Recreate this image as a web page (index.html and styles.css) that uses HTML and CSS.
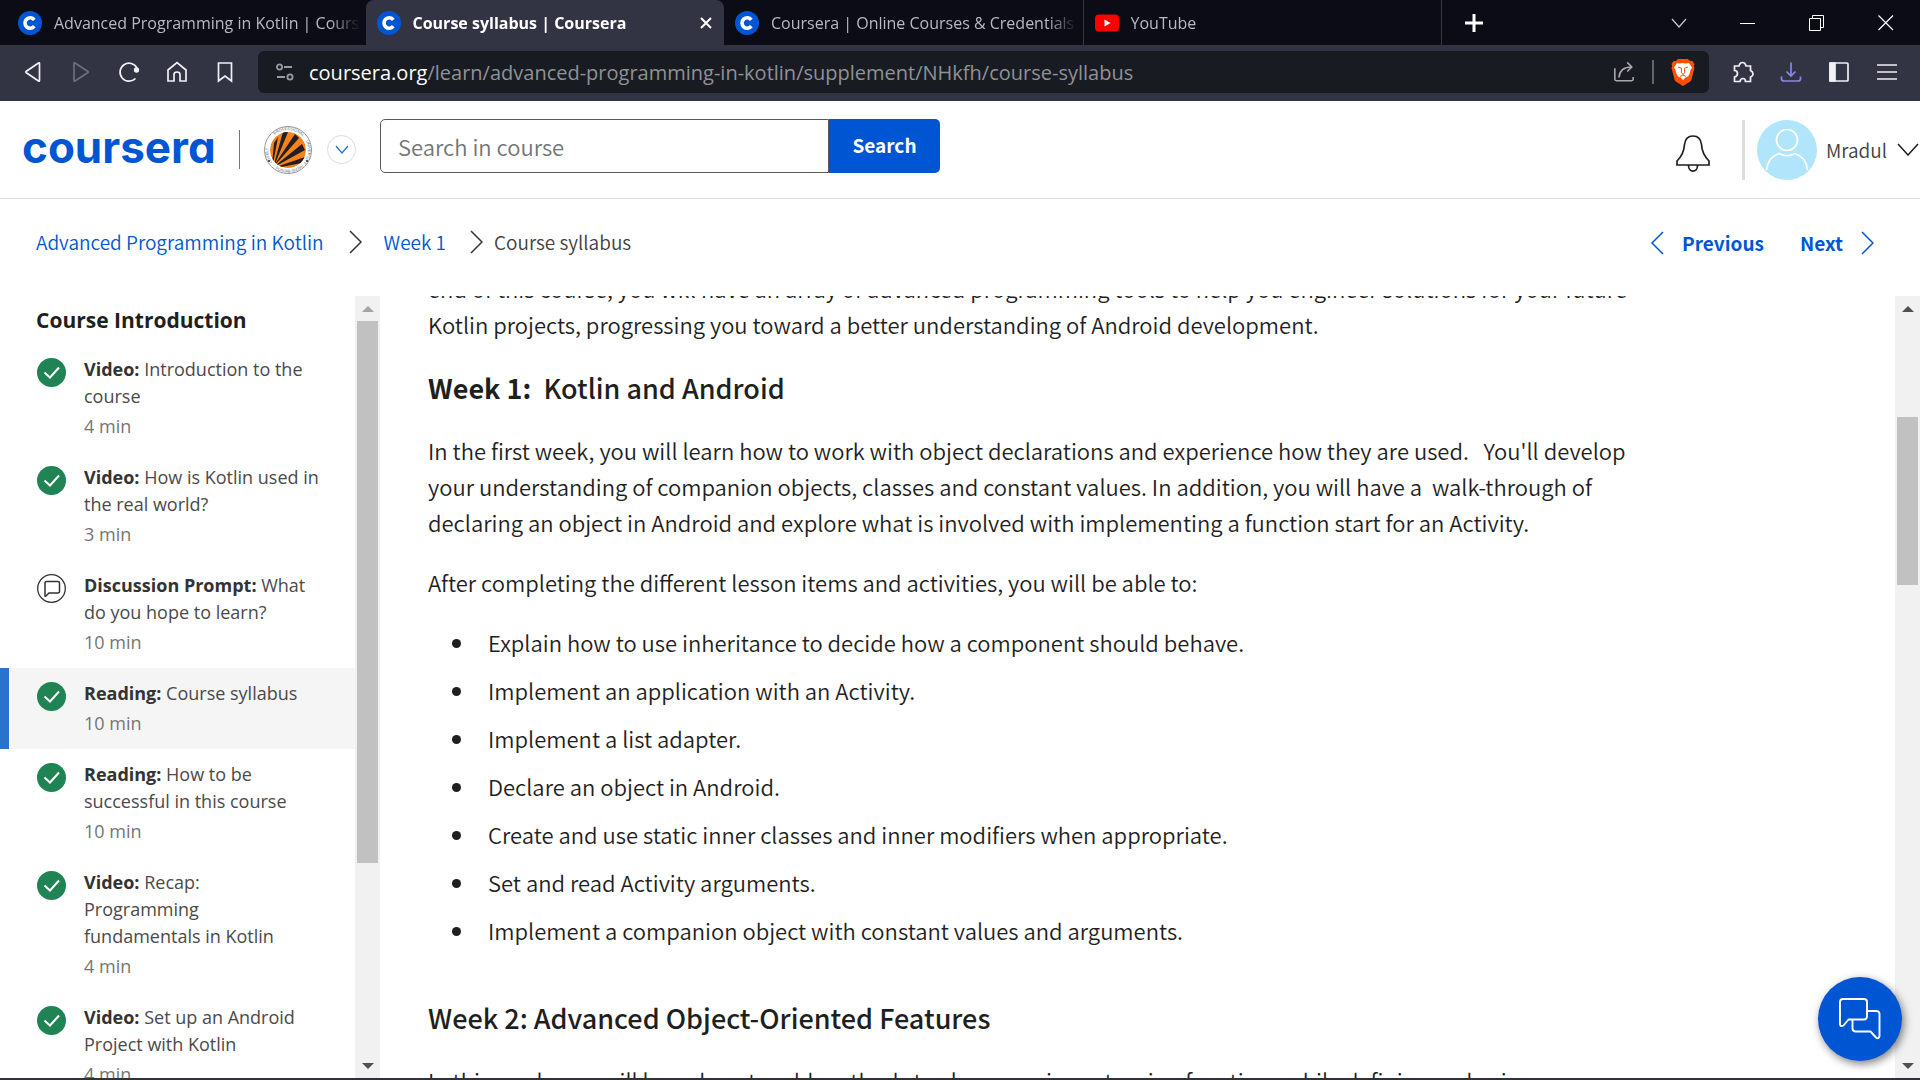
FILE: index.html
```html
<!DOCTYPE html>
<html lang="en">
<head>
<meta charset="utf-8">
<title>Course syllabus | Coursera</title>
<link rel="stylesheet" href="styles.css">
</head>
<body>
<svg class="defs" aria-hidden="true">
  <symbol id="favicon" viewBox="0 0 24 24">
    <circle cx="12" cy="12" r="12" fill="#0056d2"/>
    <path d="M16.3 8.8A5.2 5.2 0 1 0 16.3 15.2" fill="none" stroke="#fff" stroke-width="3.6"/>
  </symbol>
  <symbol id="done" viewBox="0 0 29 29">
    <circle cx="14.500" cy="14.500" r="14.500" fill="#1f8354"/>
    <path d="M7.500 14.500L13 19.500L22 9.500" fill="none" stroke="#fff" stroke-width="2"/>
  </symbol>
  <symbol id="right" viewBox="0 0 13 24">
    <path d="M1 1L12 12L1 23" fill="none" stroke="currentColor" stroke-width="1.500"/>
  </symbol>
  <symbol id="left" viewBox="0 0 13 24">
    <path d="M12 1L1 12L12 23" fill="none" stroke="currentColor" stroke-width="1.500"/>
  </symbol>
</svg>

<div class="window">
  <div class="tabstrip">
    <div class="tabs" role="tablist">
      <button class="tab" role="tab"><svg class="favicon"><use href="#favicon"/></svg><span class="tab-title">Advanced Programming in Kotlin | Coursera</span></button>
      <button class="tab tab-active" role="tab" aria-selected="true"><svg class="favicon"><use href="#favicon"/></svg><span class="tab-title">Course syllabus | Coursera</span>
        <svg class="tab-close" viewBox="0 0 12 12"><path d="M1 1L11 11M11 1L1 11" stroke="#fff" stroke-width="2"/></svg></button>
      <button class="tab" role="tab"><svg class="favicon"><use href="#favicon"/></svg><span class="tab-title">Coursera | Online Courses &amp; Credentials</span></button>
      <button class="tab tab-line" role="tab"><svg class="favicon" viewBox="0 0 24 24"><rect y="3.500" width="24" height="17" rx="4" fill="#f00"/><path d="M9.500 8.500L15.500 12L9.500 15.500Z" fill="#fff"/></svg><span class="tab-title">YouTube</span></button>
    </div>
    <button class="new-tab" aria-label="New tab"><svg width="18" height="18" viewBox="0 0 18 18"><path d="M9 0V18M0 9H18" stroke="#fff" stroke-width="3"/></svg></button>
    <div class="window-controls">
      <button aria-label="Search tabs"><svg width="16" height="16" viewBox="0 0 16 16"><path d="M1 4L8 12L15 4" fill="none" stroke="#c8c8d0" stroke-width="1.200"/></svg></button>
      <button aria-label="Minimize"><svg width="16" height="16" viewBox="0 0 16 16"><path d="M0 8.500H15" stroke="#fff"/></svg></button>
      <button aria-label="Restore"><svg width="16" height="16" viewBox="0 0 16 16"><path d="M.5 3.500H11.500V15.500H.5ZM3.500 3.500V.5H14.500V12.500H11.500" fill="none" stroke="#fff"/></svg></button>
      <button aria-label="Close"><svg width="16" height="16" viewBox="0 0 16 16"><path d="M.5 .5L15 15M15 .5L.5 15" stroke="#fff" stroke-width="1.200"/></svg></button>
    </div>
  </div>

  <div class="toolbar">
    <div class="nav-buttons">
      <button aria-label="Back"><svg class="icon" viewBox="0 0 24 24"><path d="M18.500 3.500V20.500Q18.500 21.500 17.500 21L5 12.500Q4.500 12 5 11.500L17.500 3Q18.500 2.500 18.500 3.500Z"/></svg></button>
      <button aria-label="Forward"><svg class="icon icon-off" viewBox="0 0 24 24"><path d="M5 3.500V20.500Q5 21.500 6 21L19 12.500Q19.500 12 19 11.500L6 3Q5 2.500 5 3.500Z"/></svg></button>
      <button aria-label="Reload"><svg class="icon" viewBox="0 0 24 24"><path d="M18.500 18.500A9 9 0 1 1 20 8"/><circle cx="19.500" cy="10" r="1.800" fill="#f0f0f5"/></svg></button>
      <button aria-label="Home"><svg class="icon" viewBox="0 0 24 24"><path d="M3 10L12 2.500L21 10V21H15V14.500Q15 12 12 12Q9 12 9 14.500V21H3Z"/></svg></button>
      <button aria-label="Bookmark"><svg class="icon" viewBox="0 0 24 24"><path d="M5.500 3H18.500V21L12 16L5.500 21Z"/></svg></button>
    </div>
    <div class="address">
      <svg class="tune" viewBox="0 0 18 18" fill="none" stroke="#9a9ca3" stroke-width="1.800"><circle cx="3.500" cy="4" r="2.600"/><path d="M8 4H16M1 14H9"/><circle cx="14" cy="14" r="2.600"/></svg>
      <div class="url"><span class="host">coursera.org</span>/learn/advanced-programming-in-kotlin/supplement/NHkfh/course-syllabus</div>
      <button aria-label="Share"><svg class="icon icon-share" viewBox="0 0 24 24"><path d="M2 8V20Q2 21.500 3.500 21.500H20.500Q22 21.500 22 20V17.500M6.500 18C7 11 11 6.500 20.500 6.500M15.500 1.500L20.500 6.500L15.500 11.500"/></svg></button>
      <span class="address-line"></span>
      <button aria-label="Brave Shields"><svg class="brave" viewBox="0 0 24 28"><path d="M7 1H17L19 3L21.500 3L23.500 6L22.800 8L23.500 10L20.500 21.500Q20 23 18.500 24L12 28L5.500 24Q4 23 3.500 21.500L.5 10L1.200 8L.5 6L2.500 3H5Z" fill="#ff5000"/><path d="M12 5L15 5.500L18 5L21 9.500L19.500 12L18.500 16L17 18.500L14.500 19.500L12 22L9.500 19.500L7 18.500L5.500 16L4.500 12L3 9.500L6 5L9 5.500Z" fill="#fff"/><path d="M7 9L10.500 10.200L10.300 14.500L12 16.500L13.700 14.500L13.500 10.200L17 9M9 18.500L12 17L15 18.500" fill="none" stroke="#ff5000" stroke-width="1"/></svg></button>
    </div>
    <div class="nav-buttons nav-right">
      <button aria-label="Extensions"><svg class="icon" viewBox="0 0 24 24"><path d="M3.500 6H8C8.500 4.500 8.500 2.500 11.500 2.500S14.500 4.500 15 6H19.500V10.500C20.500 11 22 11.500 22 14S20.500 16.500 19.500 17V21.500H14.500C14.500 19 13.500 18.500 12 18.500S9.500 19 9 21.500H3.500V17C5.500 16.500 6.500 15.500 6.500 13.500S5.500 10.500 3.500 10.500Z"/></svg></button>
      <button aria-label="Downloads"><svg class="icon icon-download" viewBox="0 0 24 24"><path d="M12 2.500V16M7.500 11.500L12 16L16.500 11.500M2.500 16.500V18.500Q2.500 21 5 21H19Q21.500 21 21.500 18.500V16.500"/></svg></button>
      <button aria-label="Sidebar"><svg class="icon" viewBox="0 0 24 24"><rect x="3" y="3" width="18" height="18" rx="1"/><path d="M3 3H8V21H3Z" fill="#f0f0f5"/></svg></button>
      <button aria-label="Menu"><svg class="icon" viewBox="0 0 24 24"><path d="M2 5H22M2 12H22M2 19H22"/></svg></button>
    </div>
  </div>

  <header class="header">
    <a class="logo" href="#">coursera</a>
    <span class="logo-line"></span>
    <svg class="crest" viewBox="0 0 48 48">
      <defs><path id="ring" d="M24 44A20 20 0 0 1 24 4A20 20 0 0 1 24 44"/><path id="ring-low" d="M1.500 24A22.500 22.500 0 0 0 46.500 24"/><clipPath id="ball"><circle cx="24" cy="24" r="18"/></clipPath></defs>
      <circle cx="24" cy="24" r="23.500" fill="#fff" stroke="#999" stroke-width="1"/>
      <g class="crest-text"><text><textPath href="#ring" startOffset="18">LOVELY</textPath></text><text><textPath href="#ring" startOffset="48">PROFESSIONAL</textPath></text><text><textPath href="#ring" startOffset="84">UNIVERSITY</textPath></text><text><textPath href="#ring-low" startOffset="22">PUNJAB (INDIA)</textPath></text></g>
      <g clip-path="url(#ball)"><circle cx="24" cy="24" r="18" fill="#f5821f"/><path d="M8 38L10 17L14 11L9 38ZM10 38L19 6L24 6L11 38ZM11 38L31 8L35 12L12 38ZM12 39L38 18L41 24L12 40ZM12 41L41 31L38 37L12 42Z" fill="#231f20"/></g>
      <circle cx="5" cy="35" r="1" fill="#333"/><circle cx="43" cy="35" r="1" fill="#333"/>
    </svg>
    <button class="org-toggle" aria-label="Switch organization"><svg width="14" height="9" viewBox="0 0 14 9"><path d="M1 1L7 8L13 1" fill="none" stroke="#2a73cc" stroke-width="1.300"/></svg></button>
    <form class="search">
      <input type="text" placeholder="Search in course" aria-label="Search in course">
      <button type="button">Search</button>
    </form>
    <div class="account">
      <button class="bell" aria-label="Notifications"><svg width="34" height="37" viewBox="0 0 34 37" fill="none" stroke="#1f1f1f" stroke-width="1.700"><path d="M1 30V26Q8 19 8.500 9.500Q9.500 1 17 1T25.500 9.500Q26 19 33 26V30ZM12.500 30.500C12.500 38 21.500 38 21.500 30.500"/></svg></button>
      <button class="profile"><svg class="avatar" viewBox="0 0 60 60"><circle cx="30" cy="30" r="30" fill="#b0e5fb"/><g fill="none" stroke="#fff" stroke-width="1.700"><circle cx="30" cy="20" r="10.500"/><path d="M9.500 50Q11 37 22 33.500Q30 38 38 33.500Q49 37 50.500 50"/></g></svg>
        <span>Mradul</span>
        <svg class="profile-arrow" viewBox="0 0 22 13"><path d="M1 1L11 12L21 1" fill="none" stroke="#1f1f1f" stroke-width="1.500"/></svg></button>
    </div>
  </header>

  <div class="subheader">
    <nav class="crumbs" aria-label="Breadcrumb">
      <a href="#">Advanced Programming in Kotlin</a><svg class="arrow arrow-first"><use href="#right"/></svg>
      <a href="#">Week 1</a><svg class="arrow arrow-second"><use href="#right"/></svg>
      <span>Course syllabus</span>
    </nav>
    <nav class="pager" aria-label="Items">
      <a href="#"><svg class="arrow"><use href="#left"/></svg>Previous</a>
      <a href="#">Next<svg class="arrow"><use href="#right"/></svg></a>
    </nav>
  </div>

  <div class="main">
    <aside class="sidebar">
      <h2>Course Introduction</h2>
      <ul class="items">
        <li><a href="#"><svg class="status"><use href="#done"/></svg><span><span class="name"><b>Video:</b> Introduction to the course</span><span class="time">4 min</span></span></a></li>
        <li><a href="#"><svg class="status"><use href="#done"/></svg><span><span class="name"><b>Video:</b> How is Kotlin used in the real world?</span><span class="time">3 min</span></span></a></li>
        <li><a href="#"><svg class="status" viewBox="0 0 29 29" fill="none" stroke="#333"><circle cx="14.500" cy="14.500" r="13.800" stroke-width="1.300"/><path d="M8 22V9Q8 7.500 9.500 7.500H21Q22.500 7.500 22.500 9V17.500Q22.500 19 21 19H12L9 22Q8 22.500 8 22Z" stroke-width="1.500"/></svg><span><span class="name"><b>Discussion Prompt:</b> What do you hope to learn?</span><span class="time">10 min</span></span></a></li>
        <li class="current"><a href="#" aria-current="page"><svg class="status"><use href="#done"/></svg><span><span class="name"><b>Reading:</b> Course syllabus</span><span class="time">10 min</span></span></a></li>
        <li><a href="#"><svg class="status"><use href="#done"/></svg><span><span class="name"><b>Reading:</b> How to be successful in this course</span><span class="time">10 min</span></span></a></li>
        <li><a href="#"><svg class="status"><use href="#done"/></svg><span><span class="name"><b>Video:</b> Recap: Programming fundamentals in Kotlin</span><span class="time">4 min</span></span></a></li>
        <li><a href="#"><svg class="status"><use href="#done"/></svg><span><span class="name"><b>Video:</b> Set up an Android Project with Kotlin</span><span class="time">4 min</span></span></a></li>
      </ul>
    </aside>
    <div class="scrollbar scrollbar-side">
      <svg class="step" viewBox="0 0 12 6"><path d="M0 6L6 0L12 6Z" fill="#a3a3a3"/></svg>
      <div class="track"><div class="thumb"></div></div>
      <svg class="step" viewBox="0 0 12 6"><path d="M0 0L6 6L12 0Z" fill="#505050"/></svg>
    </div>
    <main class="content">
      <article class="article">
        <p>end of this course, you will have an array of advanced programming tools to help you engineer solutions for your future Kotlin projects, progressing you toward a better understanding of Android development.</p>
        <h2><b>Week 1:&nbsp;</b> Kotlin and Android</h2>
        <p>In the first week, you will learn how to work with object declarations and experience how they are used.&nbsp;&nbsp; You'll develop your understanding of companion objects, classes and constant values. In addition, you will have a&nbsp; walk-through of declaring an object in Android and explore what is involved with implementing a function start for an Activity.</p>
        <p>After completing the different lesson items and activities, you will be able to:</p>
        <ul>
          <li>Explain how to use inheritance to decide how a component should behave.</li>
          <li>Implement an application with an Activity.</li>
          <li>Implement a list adapter.</li>
          <li>Declare an object in Android.</li>
          <li>Create and use static inner classes and inner modifiers when appropriate.</li>
          <li>Set and read Activity arguments.</li>
          <li>Implement a companion object with constant values and arguments.</li>
        </ul>
        <h2>Week 2: Advanced Object-Oriented Features</h2>
        <p>In this week, you will learn how to add methods to classes, using extension functions while defining and using</p>
      </article>
    </main>
    <div class="scrollbar scrollbar-main">
      <svg class="step" viewBox="0 0 12 6"><path d="M0 6L6 0L12 6Z" fill="#505050"/></svg>
      <div class="track"><div class="thumb"></div></div>
      <svg class="step" viewBox="0 0 12 6"><path d="M0 0L6 6L12 0Z" fill="#505050"/></svg>
    </div>
    <button class="chat" aria-label="Chat with us"><svg width="42" height="42" viewBox="0 0 42 42" fill="none" stroke="#fff" stroke-width="1.900" stroke-linejoin="round"><path d="M4 1H25Q28 1 28 4V18Q28 21.500 25 21.500H9.500L4.500 27.500Q1 29 1 26V4Q1 1 4 1Z"/><path d="M28 13H37Q40.500 13 40.500 16V38Q40 41.500 37 39.500L31.500 33.500H17Q13.500 33.500 13.500 30.500V22"/></svg></button>
  </div>
</div>
</body>
</html>
```

FILE: styles.css
```css
* { box-sizing: border-box; }

body {
  margin: 0;
  background: #fff;
  color: #1f1f1f;
  font-family: "Noto Sans CJK SC", sans-serif;
  font-size: 19px;
  font-weight: 350;
}

button {
  padding: 0;
  border: 0;
  background: none;
  color: inherit;
  font: inherit;
}

a { color: inherit; text-decoration: none; }
ul { margin: 0; padding: 0; }
svg { display: block; flex: none; }
.defs { position: absolute; width: 0; height: 0; }

.window {
  display: flex;
  flex-direction: column;
  height: 100vh;
  overflow: hidden;
  border-bottom: 2px solid #303238;
}

/* Browser tabs */
.tabstrip {
  display: flex;
  flex: none;
  height: 45px;
  padding-left: 7px;
  background: #0b0c15;
  color: #b9babf;
  font-family: "Open Sans", sans-serif;
  font-size: 16px;
  font-weight: 400;
}
.tabs { display: flex; flex: 0 1 1435px; min-width: 0; border-right: 1px solid #37383d; }
.tab {
  display: flex;
  flex: none;
  align-items: center;
  gap: 12px;
  width: 25%;
  padding: 0 6px 0 11px;
}
.tab-active {
  padding-right: 12px;
  border-radius: 8px 8px 0 0;
  background: #323443;
  color: #fff;
  font-weight: 700;
}
.tab-line { border-left: 1px solid #37383d; }
.tab-title {
  flex: 1;
  overflow: hidden;
  text-align: left;
  white-space: nowrap;
  mask-image: linear-gradient(to right, #000 calc(100% - 30px), transparent);
}
.favicon { width: 24px; height: 24px; }
.tab-close { width: 12px; height: 12px; }
.new-tab { margin-left: 23px; }
.window-controls { display: flex; gap: 53px; margin-left: auto; padding-right: 26px; }

/* Browser toolbar */
.toolbar {
  display: flex;
  flex: none;
  align-items: center;
  height: 56px;
  padding: 0 21px 2px 21px;
  background: #323443;
}
.nav-buttons { display: flex; gap: 24px; }
.nav-right { margin-left: 22px; }
.icon { width: 24px; height: 24px; fill: none; stroke: #f0f0f5; stroke-width: 1.700; }
.icon-off { stroke: #6d6e79; }
.icon-share { width: 22px; height: 24px; stroke: #aaabb0; }
.icon-download { stroke: #8b84f0; }
.address {
  display: flex;
  flex: 1;
  align-items: center;
  height: 42px;
  min-width: 0;
  margin-left: 21px;
  padding: 0 14px 0 18px;
  border-radius: 6px;
  background: #191b22;
}
.tune { width: 18px; height: 18px; }
.url {
  flex: 1;
  min-width: 0;
  margin-left: 15px;
  overflow: hidden;
  color: #8f9197;
  font-family: "Open Sans", sans-serif;
  font-size: 20px;
  font-weight: 400;
  white-space: nowrap;
}
.host { color: #fff; }
.address-line { width: 2px; height: 24px; margin: 0 17px; background: #63656b; }
.brave { width: 24px; height: 28px; }

/* Site header */
.header {
  display: flex;
  flex: none;
  align-items: center;
  height: 98px;
  padding-left: 22px;
  border-bottom: 1px solid #dcdcdc;
}
.logo {
  width: 194px;
  padding-bottom: 6px;
  color: #0056d2;
  font-family: Inter, sans-serif;
  font-feature-settings: "cv11";
  font-size: 44px;
  font-weight: 700;
  line-height: 48px;
}
.logo-line { width: 1px; height: 39px; margin: 0 24px 0 23px; background: #757575; }
.crest { width: 48px; height: 48px; }
.crest-text { fill: #666; font-family: "Liberation Sans", sans-serif; font-size: 4px; }
.org-toggle {
  display: grid;
  place-items: center;
  width: 29px;
  height: 29px;
  margin: 0 24px 0 15px;
  border: 1px solid #dcdcdc;
  border-radius: 50%;
}
.search { display: flex; flex: 0 1 560px; height: 54px; margin-bottom: 8px; }
.search input {
  flex: 1;
  min-width: 0;
  padding: 0 17px;
  border: 1px solid #5a5a5a;
  border-radius: 5px 0 0 5px;
  font: 350 22px "Noto Sans CJK SC", sans-serif;
}
.search input::placeholder { color: #757575; opacity: 1; }
.search button {
  width: 111px;
  padding-bottom: 2px;
  border-radius: 0 5px 5px 0;
  background: #0056d2;
  color: #fff;
  font-weight: 700;
}
.account { display: flex; align-items: center; margin-left: auto; }
.bell { margin: 8px 32px 0 0; }
.profile { display: flex; align-items: center; padding-left: 12px; border-left: 3px solid #dcdcdc; color: #404040; }
.avatar { width: 60px; height: 60px; margin-right: 9px; }
.profile-arrow { width: 22px; height: 13px; margin: 0 1px 0 10px; }

/* Breadcrumb and pager */
.subheader {
  display: flex;
  flex: none;
  justify-content: space-between;
  height: 97px;
  padding: 0 46px 10px 36px;
}
.crumbs, .pager, .pager a { display: flex; align-items: center; }
.crumbs { padding-bottom: 2px; color: #404040; }
.crumbs a, .pager { color: #0056d2; }
.arrow { width: 13px; height: 24px; }
.crumbs .arrow { color: #333; }
.arrow-first { margin: 0 22px 0 25px; }
.arrow-second { margin: 0 11px 0 24px; }
.pager { gap: 36px; font-weight: 700; }
.pager a { gap: 18px; }

/* Course outline */
.main { position: relative; display: flex; flex: 1; min-height: 0; }
.sidebar {
  flex: none;
  width: 355px;
  overflow: hidden;
  font-family: "Open Sans", sans-serif;
  font-size: 18px;
  font-weight: 400;
}
.sidebar h2 { margin: 0; padding-left: 36px; font-size: 21px; font-weight: 700; line-height: 48px; }
.items { list-style: none; }
.items a { display: flex; gap: 18px; padding: 12px 36px 12px 37px; color: #4a4a4a; line-height: 27px; }
.items b { color: #333; font-weight: 700; }
.status { width: 29px; height: 29px; margin-top: 2px; }
.name, .time { display: block; }
.time { margin-top: 3px; color: #757575; }
.items .current a { padding-left: 28px; border-left: 9px solid #2a73cc; background: #f5f5f5; }

.scrollbar { display: flex; flex: none; flex-direction: column; width: 25px; background: #f1f1f1; }
.step { width: 12px; height: 6px; margin: 10px auto 9px; }
.track { display: flex; flex: 1; flex-direction: column; padding: 0 2px; }
.thumb { background: #c1c1c1; }
.scrollbar-side .thumb { height: 74%; }
.scrollbar-main .thumb { height: 23%; margin-top: 96px; }

/* Reading */
.content { flex: 1; min-width: 0; overflow: hidden; padding-left: 48px; }
.article { max-width: 1200px; margin-top: -26px; font-size: 22px; line-height: 36px; }
.article p { margin: 0 0 24px; }
.article h2 { margin: 28px 0 26px; font-size: 27px; font-weight: 500; line-height: 36px; }
.article h2 b { font-weight: 700; }
.article ul { margin-bottom: 52px; padding-left: 48px; }
.article li { margin-bottom: 12px; padding-left: 12px; }

.chat {
  position: absolute;
  right: 18px;
  bottom: 17px;
  display: grid;
  place-items: center;
  width: 84px;
  height: 84px;
  border-radius: 50%;
  background: #0056d2;
  box-shadow: 2px 3px 8px rgba(0, 0, 0, .5);
}
```
